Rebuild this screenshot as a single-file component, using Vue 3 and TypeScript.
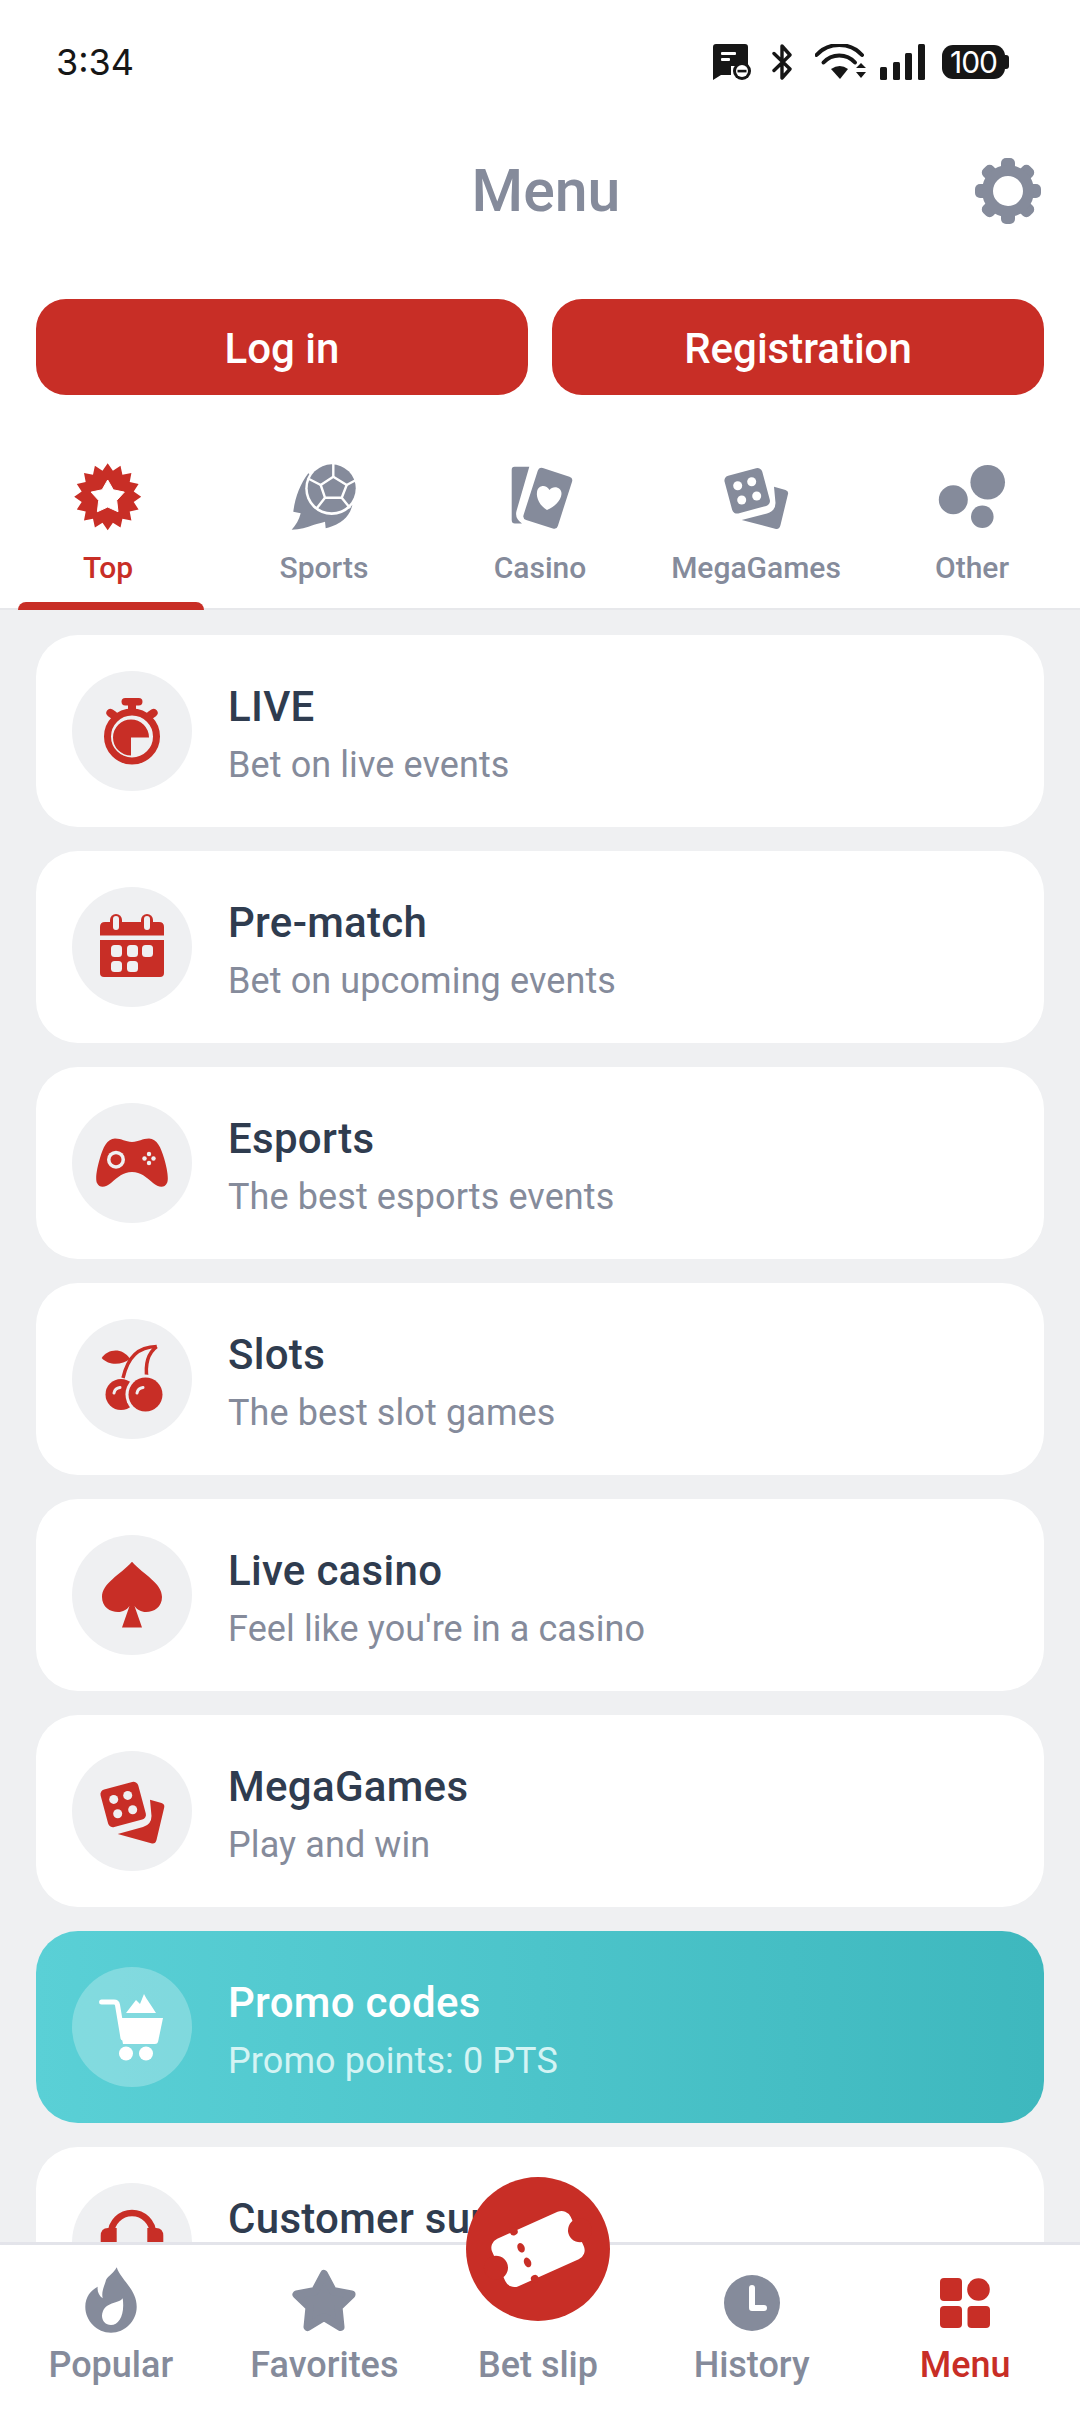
<template>
  <div class="screen">
    <div class="status">
      <span class="clock">3:34</span>
      <div class="status-icons">
        <svg class="st-msg" width="38" height="36" viewBox="0 0 38 36">
          <path d="M3 0H32Q35 0 35 3V22H18V31H8L0 36V3Q0 0 3 0Z" fill="#161616" />
          <rect x="8" y="8" width="15" height="3" rx="1" fill="#fff" />
          <rect x="8" y="14" width="9" height="3" rx="1" fill="#fff" />
          <circle cx="29" cy="27" r="9" fill="#161616" />
          <circle cx="29" cy="27" r="6" fill="#fff" />
          <rect x="24.5" y="25.8" width="9" height="2.6" fill="#161616" />
        </svg>
        <svg class="st-bt" width="21" height="36" viewBox="0 0 21 36">
          <path d="M2 9.500L18 25L10 34V2L18 11L2 26.500" fill="none" stroke="#161616" stroke-width="3.400" stroke-linecap="round" stroke-linejoin="round" />
        </svg>
        <svg class="st-wifi" width="51" height="36" viewBox="0 0 51 36">
          <path d="M1.500 11A31 31 0 0 1 47 11" fill="none" stroke="#161616" stroke-width="4" stroke-linecap="round" />
          <path d="M8.500 18.500A21 21 0 0 1 40 18.500" fill="none" stroke="#161616" stroke-width="4" stroke-linecap="round" />
          <path d="M16 25L25 35L33 25Q25 19 16 25Z" fill="#161616" />
          <path d="M41 24L46 19L51 24ZM41 28H51L46 34Z" fill="#161616" />
        </svg>
        <svg class="st-signal" width="45" height="36" viewBox="0 0 45 36">
          <rect x="0" y="23" width="7" height="13" rx="1.500" fill="#161616" />
          <rect x="13" y="18" width="7" height="18" rx="1.500" fill="#161616" />
          <rect x="25" y="9" width="7" height="27" rx="1.500" fill="#161616" />
          <rect x="38" y="0" width="7" height="36" rx="1.500" fill="#161616" />
        </svg>
        <div class="battery"><span>100</span></div>
      </div>
    </div>

    <div class="title-bar">
      <h1>Menu</h1>
      <svg class="gear" width="72" height="72" viewBox="0 0 72 72">
        <rect v-for="a in gearTeeth" :key="a" x="29" y="3" width="14" height="66" rx="5" fill="#858b9b" :transform="`rotate(${a} 36 36)`" />
        <circle cx="36" cy="36" r="20.500" fill="#fff" stroke="#858b9b" stroke-width="11" />
      </svg>
    </div>

    <div class="auth">
      <button class="auth-btn">Log in</button>
      <button class="auth-btn">Registration</button>
    </div>

    <div class="tabs">
      <div v-for="tab in tabs" :key="tab.key" class="tab" :class="{ 'tab--active': tab.key === 'top' }">
        <svg width="72" height="72" viewBox="0 0 72 72">
          <template v-if="tab.key === 'top'">
            <polygon :points="burst" fill="#c82e26" />
            <polygon :points="topStar" fill="#fff" stroke="#fff" stroke-width="1" stroke-linejoin="round" />
          </template>
          <template v-else-if="tab.key === 'sports'">
            <path d="M20.300 11.300C12 22 7 36 5.300 49.700L12.700 51.300C11 58 8 63 3.700 67.700C12 67.500 19 65.500 25.300 63C30 61.500 34 60.500 37 59.700L37.700 66.300C46 64 52 61 55.300 58C60 54 63 49 64.300 43Z" fill="#858b9b" />
            <circle cx="43.700" cy="26.500" r="26.500" fill="#fff" />
            <circle cx="43.700" cy="26.300" r="24" fill="#858b9b" />
            <g fill="none" stroke="#fff" stroke-width="2.400" stroke-linejoin="round">
              <polygon points="45.300,14.700 58.700,23 53.700,35.700 37,35.700 32.700,23" />
              <path d="M45.300 14.700V1M58.700 23L68 18M53.700 35.700L62 46M37 35.700L29 46M32.700 23L21 17" />
            </g>
          </template>
          <template v-else-if="tab.key === 'casino'">
            <path d="M10.500 4.700H25.300L12.500 49Q10.500 56 18 61.500H11Q7.700 61.500 7.700 58V8Q7.700 4.700 10.500 4.700Z" fill="#858b9b" />
            <rect x="25.800" y="9.100" width="36" height="54.400" rx="4" fill="#858b9b" transform="rotate(17.800 43.800 36.300)" />
            <path d="M43 48C36 44 32 36 33 30C34 23 42 22 45.500 28C49 23 58 25 57.500 32C57 39 50 45 43 48Z" fill="#fff" />
          </template>
          <template v-else-if="tab.key === 'mega'">
            <path d="M54 24.700L65.500 28Q68.800 29 68 32L60.500 63Q59.500 67.500 56 67L21.700 58L47 51.500Q55.500 49 55.500 41Z" fill="#858b9b" />
            <rect x="7.700" y="9.300" width="39" height="39" rx="5" fill="#858b9b" transform="rotate(-15 27.200 28.800)" />
            <g fill="#fff">
              <circle cx="17.700" cy="23.700" r="4.500" />
              <circle cx="31.700" cy="19.700" r="4.500" />
              <circle cx="21.700" cy="38" r="4.500" />
              <circle cx="36.700" cy="34" r="4.500" />
            </g>
          </template>
          <template v-else>
            <circle cx="51.700" cy="20.300" r="17.300" fill="#858b9b" />
            <circle cx="17.300" cy="37.700" r="14.500" fill="#858b9b" />
            <circle cx="46.300" cy="54.700" r="11.300" fill="#858b9b" />
          </template>
        </svg>
        <span class="tab-label">{{ tab.label }}</span>
      </div>
    </div>

    <div class="list">
      <div v-for="item in items" :key="item.key" class="row" :class="{ 'row--promo': item.key === 'promo' }">
        <div class="row-icon">
          <svg width="72" height="72" viewBox="0 0 72 72">
            <template v-if="item.key === 'live'">
              <rect x="25.500" y="3" width="21" height="7.500" rx="3.700" fill="#c82e26" />
              <rect x="32" y="8" width="8" height="10" fill="#c82e26" />
              <rect x="10" y="15" width="12" height="8" rx="4" fill="#c82e26" transform="rotate(35 16 19)" />
              <rect x="50" y="15" width="12" height="8" rx="4" fill="#c82e26" transform="rotate(-35 56 19)" />
              <circle cx="36" cy="41.500" r="24.500" fill="#eff0f2" stroke="#c82e26" stroke-width="7" />
              <path d="M35 42.500V24.500A18 18 0 1 0 53 42.500Z" transform="rotate(90 35 42.500)" fill="#c82e26" />
            </template>
            <template v-else-if="item.key === 'prematch'">
              <path d="M4 24.400V16Q4 11 9 11H63Q68 11 68 16V24.400Z" fill="#c82e26" />
              <path d="M4 29H68V62Q68 66 64 66H8Q4 66 4 62Z" fill="#c82e26" />
              <rect x="14" y="3" width="12" height="18" rx="6" fill="#c82e26" />
              <rect x="45" y="3" width="12" height="18" rx="6" fill="#c82e26" />
              <rect x="17" y="5" width="6" height="14" rx="3" fill="#eff0f2" />
              <rect x="48" y="5" width="6" height="14" rx="3" fill="#eff0f2" />
              <g fill="#eff0f2">
                <rect x="15" y="34" width="11" height="12" rx="3.500" />
                <rect x="31" y="34" width="11" height="12" rx="3.500" />
                <rect x="46" y="34" width="11" height="12" rx="3.500" />
                <rect x="15" y="50" width="11" height="11" rx="3.500" />
                <rect x="31" y="50" width="11" height="11" rx="3.500" />
              </g>
            </template>
            <template v-else-if="item.key === 'esports'">
              <path d="M19 11.600C26 11.600 29 15 36 15C43 15 46 11.600 53 11.600C61 11.600 65 21 68 31C71 41 73 52 71 56C68 62 62 60 57 56C50 50 45 45 36 45C27 45 22 50 15 56C10 60 4 62 1 56C-1 52 1 41 4 31C7 21 11 11.600 19 11.600Z" fill="#c82e26" />
              <circle cx="20" cy="32.700" r="9" fill="#eff0f2" />
              <circle cx="20" cy="32.700" r="5.500" fill="#c82e26" />
              <g fill="#eff0f2">
                <circle cx="53" cy="27" r="2.200" />
                <circle cx="53" cy="36" r="2.200" />
                <circle cx="48.500" cy="31.500" r="2.200" />
                <circle cx="57.500" cy="31.500" r="2.200" />
              </g>
            </template>
            <template v-else-if="item.key === 'slots'">
              <path d="M5.700 15C12 6 26 4 34 16C26 22 13 23 5.700 15Z" fill="#c82e26" />
              <path d="M60.700 3.600C42 4 32 14 27 35" fill="none" stroke="#c82e26" stroke-width="3.500" />
              <path d="M60.700 3.600C52 10 49 22 51 36" fill="none" stroke="#c82e26" stroke-width="3.500" />
              <circle cx="25" cy="51.500" r="15.500" fill="#c82e26" />
              <circle cx="49.500" cy="51.500" r="20" fill="#eff0f2" />
              <circle cx="49.500" cy="51.500" r="17" fill="#c82e26" />
              <path d="M18 50Q19 45 24 44.500" fill="none" stroke="#eff0f2" stroke-width="3" stroke-linecap="round" />
              <path d="M41 50Q42 45 47 44.500" fill="none" stroke="#eff0f2" stroke-width="3" stroke-linecap="round" />
            </template>
            <template v-else-if="item.key === 'livecasino'">
              <path d="M36 2.700C48 16 66 24 66 38C66 48 58 53 50 53C45 53 41 50.500 38.500 47L46 68.500H26L33.500 47C31 50.500 27 53 22 53C14 53 6 48 6 38C6 24 24 16 36 2.700Z" fill="#c82e26" />
            </template>
            <template v-else-if="item.key === 'megagames'">
              <path d="M54 24.700L65.500 28Q69 29 68.200 32.500L60.500 65Q59.500 69 56 68.500L21.700 59L47 52Q55.500 49.500 55.500 41Z" fill="#c82e26" />
              <rect x="7.700" y="10" width="39" height="39" rx="5" fill="#c82e26" transform="rotate(-15 27.200 29.500)" />
              <g fill="#eff0f2">
                <circle cx="17.700" cy="24.400" r="4.500" />
                <circle cx="31.700" cy="20.400" r="4.500" />
                <circle cx="21.700" cy="38.700" r="4.500" />
                <circle cx="36.700" cy="34.700" r="4.500" />
              </g>
            </template>
            <template v-else-if="item.key === 'promo'">
              <path d="M30 22L40 9L44 13L48 3C51 9 55 14 60 22Z" fill="#fff" />
              <path d="M5.600 11H18Q21 11 21.500 14L27 47H57" fill="none" stroke="#fff" stroke-width="5" stroke-linejoin="round" stroke-linecap="round" />
              <path d="M22 27H67L62 51Q61.500 53 59 53H27Z" fill="#fff" />
              <circle cx="30" cy="62.500" r="7" fill="#fff" />
              <circle cx="50" cy="62.500" r="7" fill="#fff" />
            </template>
            <template v-else>
              <path d="M15 40V27A21 21 0 0 1 57 27V40" fill="none" stroke="#c82e26" stroke-width="6.500" />
              <path d="M20.700 21V60H12Q4.700 60 4.700 52V29Q4.700 21 12 21Z" fill="#c82e26" />
              <path d="M51.300 21V60H60Q67.300 60 67.300 52V29Q67.300 21 60 21Z" fill="#c82e26" />
            </template>
          </svg>
        </div>
        <div class="row-text">
          <span class="row-title">{{ item.title }}</span>
          <span class="row-sub">{{ item.sub }}</span>
        </div>
      </div>
    </div>

    <div class="nav">
      <div class="nav-item">
        <svg width="72" height="72" viewBox="0 0 72 72">
          <path fill-rule="evenodd" d="M41.700 2.300C45 14 61.700 24 61.700 41.700C61.700 56 50 67.700 36 67.700C22 67.700 10.300 56 10.300 41.700C10.300 32 16 25 22.700 21.700C22 26 24 31 27.700 33.300C26 26 30 20 31 15C33 11 39 8 41.700 2.300ZM47.700 33.300C45 38 32 37 28 46C25 53 29 60 36 60C44 60 50 50 47.700 33.300Z" fill="#858b9b" />
        </svg>
        <span>Popular</span>
      </div>
      <div class="nav-item">
        <svg width="72" height="72" viewBox="0 0 72 72">
          <polygon points="36,9 45,26 63.500,29.500 50.500,42 52.500,62 36,52 19.500,62 21.500,42 8.500,29.500 27,26" fill="#858b9b" stroke="#858b9b" stroke-width="8" stroke-linejoin="round" />
        </svg>
        <span>Favorites</span>
      </div>
      <div class="nav-item nav-item--fab">
        <span>Bet slip</span>
      </div>
      <div class="nav-item">
        <svg width="72" height="72" viewBox="0 0 72 72">
          <circle cx="36" cy="38" r="28" fill="#858b9b" />
          <path d="M36 23V43H48" fill="none" stroke="#fff" stroke-width="6" stroke-linecap="round" stroke-linejoin="round" />
        </svg>
        <span>History</span>
      </div>
      <div class="nav-item nav-item--active">
        <svg width="72" height="72" viewBox="0 0 72 72">
          <rect x="11" y="13" width="22" height="23" rx="4" fill="#c82e26" />
          <circle cx="49.500" cy="24.500" r="11.300" fill="#c82e26" />
          <rect x="11" y="41" width="22" height="22" rx="4" fill="#c82e26" />
          <rect x="38.500" y="41" width="22.500" height="22" rx="4" fill="#c82e26" />
        </svg>
        <span>Menu</span>
      </div>
      <div class="fab">
        <svg width="144" height="144" viewBox="0 0 144 144">
          <g transform="rotate(-24 72 72)">
            <rect x="29" y="46" width="86" height="52" rx="10" fill="#fff" />
            <circle cx="118" cy="72" r="12" fill="#c82e26" />
            <circle cx="26" cy="72" r="12" fill="#c82e26" />
            <circle cx="57" cy="46" r="4" fill="#c82e26" />
            <circle cx="57" cy="98" r="4" fill="#c82e26" />
            <ellipse cx="57" cy="64" rx="3.500" ry="5" fill="#c82e26" />
            <ellipse cx="57" cy="80" rx="3.500" ry="5" fill="#c82e26" />
          </g>
        </svg>
      </div>
    </div>
  </div>
</template>

<script setup lang="ts">
interface Tab {
  key: string
  label: string
}

interface Item {
  key: string
  title: string
  sub: string
}

const tabs: Tab[] = [
  { key: 'top', label: 'Top' },
  { key: 'sports', label: 'Sports' },
  { key: 'casino', label: 'Casino' },
  { key: 'mega', label: 'MegaGames' },
  { key: 'other', label: 'Other' },
]

const items: Item[] = [
  { key: 'live', title: 'LIVE', sub: 'Bet on live events' },
  { key: 'prematch', title: 'Pre-match', sub: 'Bet on upcoming events' },
  { key: 'esports', title: 'Esports', sub: 'The best esports events' },
  { key: 'slots', title: 'Slots', sub: 'The best slot games' },
  { key: 'livecasino', title: 'Live casino', sub: "Feel like you're in a casino" },
  { key: 'megagames', title: 'MegaGames', sub: 'Play and win' },
  { key: 'promo', title: 'Promo codes', sub: 'Promo points: 0 PTS' },
  { key: 'support', title: 'Customer support', sub: '' },
]

const gearTeeth = [0, 45, 90, 135]

function starPoints(cx: number, cy: number, outer: number, inner: number, spikes: number): string {
  const pts: string[] = []
  for (let i = 0; i < spikes * 2; i++) {
    const r = i % 2 === 0 ? outer : inner
    const a = (Math.PI * i) / spikes - Math.PI / 2
    pts.push(`${(cx + r * Math.cos(a)).toFixed(1)},${(cy + r * Math.sin(a)).toFixed(1)}`)
  }
  return pts.join(' ')
}

const burst = starPoints(35.7, 34.7, 33.5, 26.5, 16)
const topStar = starPoints(35.7, 35.5, 17.5, 9.5, 5)
</script>

<style>
html,
body {
  margin: 0;
  background: #fff;
}
</style>

<style scoped>
.screen {
  width: 1080px;
  height: 2412px;
  display: flex;
  flex-direction: column;
  overflow: hidden;
  background: #fff;
  font-family: Roboto, "Noto Sans", sans-serif;
}

.status {
  height: 56px;
  padding: 34px 75px 0 56px;
  display: flex;
  align-items: center;
  justify-content: space-between;
  flex-shrink: 0;
}

.clock {
  font-family: Inter, Roboto, sans-serif;
  font-size: 36px;
  color: #161616;
}

.status-icons {
  display: flex;
  align-items: center;
}

.st-bt {
  margin-left: 21px;
}

.st-wifi {
  margin-left: 22px;
}

.st-signal {
  margin-left: 14px;
}

.battery {
  margin-left: 17px;
  width: 63px;
  height: 34px;
  border-radius: 11px;
  background: #161616;
  display: flex;
  align-items: center;
  justify-content: center;
  position: relative;
  color: #fff;
  font-family: Inter, Roboto, sans-serif;
  font-size: 30px;
  letter-spacing: -1px;
}

.battery::after {
  content: '';
  position: absolute;
  right: -4px;
  top: 10px;
  width: 4px;
  height: 14px;
  border-radius: 0 3px 3px 0;
  background: #161616;
}

.title-bar {
  height: 200px;
  position: relative;
  display: flex;
  align-items: center;
  justify-content: center;
  padding-left: 12px;
  flex-shrink: 0;
}

.title-bar h1 {
  margin: 0;
  font-size: 59px;
  font-weight: 500;
  color: #858b9b;
}

.gear {
  position: absolute;
  right: 36px;
  top: 65px;
}

.auth {
  display: flex;
  gap: 24px;
  padding: 9px 36px 0;
  flex-shrink: 0;
}

.auth-btn {
  flex: 1;
  height: 96px;
  border: 0;
  border-radius: 30px;
  padding: 2px 0 0;
  background: #c82e26;
  color: #fff;
  font-family: inherit;
  font-size: 42px;
  font-weight: 500;
}

.tabs {
  display: flex;
  height: 213px;
  border-bottom: 2px solid #e7e8eb;
  flex-shrink: 0;
}

.tab {
  position: relative;
  flex: 1;
  padding-top: 67px;
  display: flex;
  flex-direction: column;
  align-items: center;
}

.tab-label {
  margin-top: 14px;
  line-height: 40px;
  font-size: 30px;
  font-weight: 500;
  color: #858b9b;
}

.tab--active .tab-label {
  color: #c82e26;
}

.tab--active::after {
  content: '';
  position: absolute;
  left: 18px;
  right: 12px;
  bottom: -2px;
  height: 8px;
  border-radius: 8px 8px 0 0;
  background: #c82e26;
}

.list {
  flex: 1;
  min-height: 0;
  overflow: hidden;
  background: #eff0f2;
  padding: 25px 36px 0;
  display: flex;
  flex-direction: column;
  gap: 24px;
}

.row {
  height: 192px;
  flex-shrink: 0;
  border-radius: 42px;
  background: #fff;
  display: flex;
  align-items: center;
  padding-left: 36px;
}

.row--promo {
  background: linear-gradient(90deg, #5ad0d6, #3eb8be);
}

.row-icon {
  width: 120px;
  height: 120px;
  border-radius: 50%;
  background: #eff0f2;
  display: flex;
  align-items: center;
  justify-content: center;
  flex-shrink: 0;
}

.row--promo .row-icon {
  background: rgba(255, 255, 255, 0.25);
}

.row-text {
  margin-left: 36px;
  padding-top: 5px;
  display: flex;
  flex-direction: column;
  gap: 10px;
}

.row-title {
  font-size: 42px;
  line-height: 52px;
  font-weight: 500;
  letter-spacing: 0.3px;
  color: #2f3c4f;
}

.row-sub {
  min-height: 44px;
  font-size: 36px;
  line-height: 44px;
  letter-spacing: 0.1px;
  color: #858b9b;
}

.row--promo .row-title {
  color: #fff;
}

.row--promo .row-sub {
  color: #d4f4f4;
}

.nav {
  position: relative;
  box-sizing: border-box;
  height: 170px;
  flex-shrink: 0;
  padding: 20px 8px 0 4px;
  border-top: 3px solid #e3e4ea;
  background: #fff;
  display: grid;
  grid-template-columns: repeat(5, 1fr);
}

.nav-item {
  display: flex;
  flex-direction: column;
  align-items: center;
  font-size: 36px;
  font-weight: 500;
  color: #858b9b;
}

.nav-item span {
  margin-top: 6px;
  line-height: 44px;
}

.nav-item--fab span {
  margin-top: 78px;
}

.nav-item--active {
  color: #c82e26;
}

.fab {
  position: absolute;
  left: 466px;
  top: -68px;
  width: 144px;
  height: 144px;
  border-radius: 50%;
  background: #c82e26;
}
</style>
